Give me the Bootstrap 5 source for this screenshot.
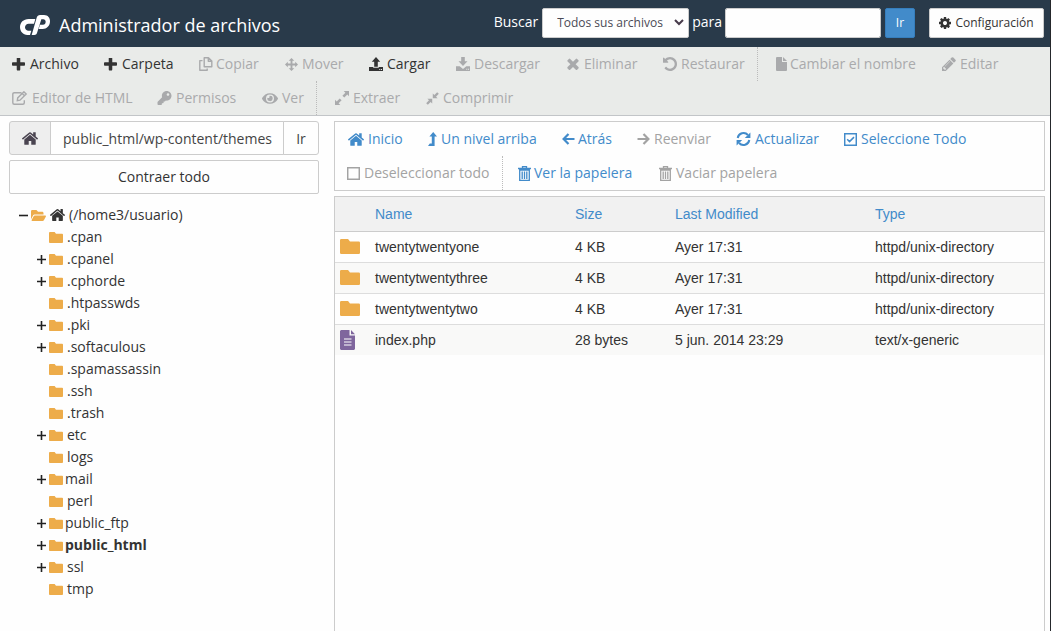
<!DOCTYPE html>
<html lang="es">
<head>
<meta charset="utf-8">
<title>Administrador de archivos</title>
<link rel="stylesheet" href="https://cdn.jsdelivr.net/npm/bootstrap@5.3.0/dist/css/bootstrap.min.css">
<style>
body{font:14px/20px "Open Sans",sans-serif;color:#333;background:#fefefe;height:631px;overflow:hidden;border-right:1px solid #25282c}
svg{display:block;fill:currentColor;flex:none}
.topbar{height:47px;background:#293a4a;color:#fff;padding:0 6px 2px 20px}
.brand-title{font-size:18px;margin-left:9px;padding-top:4px}
.logo{margin-top:5px}
.topbar .form-control,.topbar .form-select{height:30px;border:1px solid #ccc;border-radius:2px;font-size:12px;padding:0 14px;color:#4a4a55;background-color:#fefefe}
.topbar .form-select{width:147px;background-image:url("data:image/svg+xml,%3Csvg xmlns='http://www.w3.org/2000/svg' viewBox='0 0 10 7'%3E%3Cpath d='M1 1l4 4 4-4' fill='none' stroke='%23473b4b' stroke-width='2'/%3E%3C/svg%3E");background-size:10px 7px;background-position:right 4px center}
.topbar .search-box{width:156px}
.topbar .btn{height:30px;border-radius:2px;font-size:12px;line-height:18px;padding:0}
.btn-go{width:30px;background:#428bca;border-color:#357ebd;color:#fff}
.topbar .btn-config{width:115px;background:#fefefe;border-color:#ccc;color:#333;margin-left:10px}
.lbl{margin-top:-2px}
.lbl-for{margin-left:-1px;margin-right:-1px}
.tools{background:#e9ebe9;border-bottom:1px solid #c2c5c8;height:69px}
.trow{display:grid;height:34px;align-items:center;white-space:nowrap}
.r1{grid-template-columns:92px 95px 86px 84px 87px 111px 96px 94px 19px 166px auto;padding-left:12px}
.r2{grid-template-columns:145px 105px 54px 19px 91px auto;padding-left:12px}
.p1{grid-template-columns:80px 134px 75px 99px 108px auto;padding-left:13px}
.p2{grid-template-columns:155px 16px 141px auto;padding-left:12px}
.sep{border-left:1px dotted #bbb;height:34px}
.it,.it:hover{display:flex;align-items:center;color:#333;text-decoration:none!important}
.trow .off{color:#a9aaac}
.panel .it{color:#428bca}.panel .off{color:#a3a3a3}
.w13{width:13px}.w14{width:14px}.w16{width:16px}.w17{width:17px}.w18{width:18px}.w19{width:19px}.w20{width:20px}
.ic{flex:none}
.side{width:310px;margin-left:9px;padding-top:5px}
.path-group{height:34px}
.path-group>*{border:1px solid #ccc;font-size:14px;height:34px;color:#444}
.path-group .input-group-text{width:42px;background:#eee;padding:0 0 0 12px;border-radius:3px;color:#4a4450}
.path-group .form-control{padding:1px 11px 0 12px;background:#fefefe}
.path-group .btn{width:36px;padding:0;background:#fefefe;border-radius:3px}
.btn-collapse{height:34px;margin-top:5px;border:1px solid #ccc;border-radius:2px;font-size:14px;line-height:20px;padding:0;background:#fefefe;color:#333}
.tree{margin:10px 0 0;padding:0;list-style:none}
.tree li{height:22px;display:flex;align-items:center;padding-left:28px;white-space:nowrap}
.tree .tg{width:12px;flex:none;color:#222}
.tree .fo{color:#edac4a}
.tree .nm{margin-left:4px}
.tree .nm.tight{margin-left:2px}
.tree li.root{padding-left:10px}
.main{width:711px;margin:5px 0 0 15px}
.panel{height:70px;border:1px solid #ccc}
.files{margin-top:5px;height:440px;border:1px solid #ccc;border-bottom:0;font-family:"Liberation Sans",Arial,sans-serif}
.files .table{margin:0;table-layout:fixed;--bs-table-bg:transparent;color:#333}
.files th,.files td{padding:0;height:31px;font-weight:400;vertical-align:middle;border-bottom:1px solid #ddd;line-height:18px}
.files th{height:34px;padding-top:1px;color:#428bca;background:#f1f1f1;border-bottom:1px solid #ccc}
.files td:first-child{padding-left:5px}
.files tbody tr:nth-child(even) td{background:#f9f9f8}
.files tbody tr:last-child td{border-bottom:0}
</style>
</head>
<body>
<svg width="0" height="0" class="position-absolute">
<symbol id="plus" viewBox="192 192 1408 1408"><path d="M1600 736v192q0 40-28 68t-68 28h-416v416q0 40-28 68t-68 28h-192q-40 0-68-28t-28-68v-416h-416q-40 0-68-28t-28-68v-192q0-40 28-68t68-28h416v-416q0-40 28-68t68-28h192q40 0 68 28t28 68v416h416q40 0 68 28t28 68z"/></symbol>
<symbol id="home" viewBox="89 250 1614 1290"><path d="M1472 992v480q0 26-19 45t-45 19h-384v-384h-256v384h-384q-26 0-45-19t-19-45v-480q0-1 .5-3t.5-3l575-474 575 474q1 2 1 6zm223-69l-62 74q-8 9-21 11h-3q-13 0-21-7l-692-577-692 577q-12 8-24 7-13-2-21-11l-62-74q-8-10-7-23.500t11-21.500l719-599q32-26 76-26t76 26l244 204v-195q0-14 9-23t23-9h192q14 0 23 9t9 23v408l219 182q10 8 11 21.500t-7 23.500z"/></symbol>
<symbol id="pencil" viewBox="128 128 1536 1536"><path d="M491 1536l91-91-235-235-91 91v107h128v128h107zm523-928q0-22-22-22-10 0-17 7l-542 542q-7 7-7 17 0 22 22 22 10 0 17-7l542-542q7-7 7-17zm-54-192l416 416-832 832h-416v-416zm683 96q0 53-37 90l-166 166-416-416 166-165q36-38 90-38 53 0 91 38l235 234q37 39 37 91z"/></symbol>
<symbol id="cog" viewBox="128 128 1536 1536"><path d="M1152 896q0-106-75-181t-181-75-181 75-75 181 75 181 181 75 181-75 75-181zm512-109v222q0 12-8 23t-20 13l-185 28q-19 54-39 91 35 50 107 138 10 12 10 25t-9 23q-27 37-99 108t-94 71q-12 0-26-9l-138-108q-44 23-91 38-16 136-29 186-7 28-36 28h-222q-14 0-24.500-8.500t-11.500-21.500l-28-184q-49-16-90-37l-141 107q-10 9-25 9-14 0-25-11-126-114-165-168-7-10-7-23 0-12 8-23 15-21 51-66.500t54-70.500q-27-50-41-99l-183-27q-13-2-21-12.500t-8-23.500v-222q0-12 8-23t19-13l186-28q14-46 39-92-40-57-107-138-10-12-10-24 0-10 9-23 26-36 98.500-107.500t94.500-71.500q13 0 26 10l138 107q44-23 91-38 16-136 29-186 7-28 36-28h222q14 0 24.500 8.500t11.500 21.500l28 184q49 16 90 37l142-107q9-9 24-9 13 0 25 10 129 119 165 170 7 8 7 22 0 12-8 23-15 21-51 66.500t-54 70.500q26 50 41 98l183 28q13 2 21 12.500t8 23.500z"/></symbol>
<symbol id="times" viewBox="302 302 1188 1252"><path d="M1490 1322q0 40-28 68l-136 136q-28 28-68 28t-68-28l-294-294-294 294q-28 28-68 28t-68-28l-136-136q-28-28-28-68t28-68l294-294-294-294q-28-28-28-68t28-68l136-136q28-28 68-28t68 28l294 294 294-294q28-28 68-28t68 28l136 136q28 28 28 68t-28 68l-294 294 294 294q28 28 28 68z"/></symbol>
<symbol id="undo" viewBox="128 128 1536 1536"><path d="M1664 896q0 156-61 298t-164 245-245 164-298 61q-172 0-327-72.500t-264-204.500q-7-10-6.500-22.500t8.500-20.500l137-138q10-9 25-9 16 2 23 12 73 95 179 147t225 52q104 0 198.500-40.500t163.500-109.500 109.500-163.500 40.500-198.500-40.500-198.500-109.500-163.500-163.500-109.500-198.500-40.500q-98 0-188 35.500t-160 101.500l137 138q31 30 14 69-17 40-59 40h-448q-26 0-45-19t-19-45v-448q0-42 40-59 39-17 69 14l130 129q107-101 244.500-156.500t284.500-55.500q156 0 298 61t245 164 164 245 61 298z"/></symbol>
<symbol id="copy" viewBox="0 0 14 14"><path d="M5.200.7h4.300l3.300 3.200v5.900H5.200zM9.300.9v3.300h3.300M3.500 3.600H.8v9.700h7.400v-1.800" fill="none" stroke="currentColor" stroke-width="1.400" stroke-linejoin="round"/></symbol>
<symbol id="move" viewBox="0 0 14 14"><path d="M7 0l3 3H8v3h3V4l3 3-3 3V8H8v3h2l-3 3-3-3h2V8H3v2L0 7l3-3v2h3V3H4z"/></symbol>
<symbol id="upload" viewBox="0 0 14 14"><path d="M7 0l4.200 4.700H8.800v5H5.200v-5H2.800zM0 10h4.200v.7h5.600V10H14v4H0zm10.300 2v1h1v-1zm1.700 0v1h1v-1z" fill-rule="evenodd"/></symbol>
<symbol id="download" viewBox="0 0 14 14"><path d="M5.200 0h3.600v4.300h2.700L7 9 2.500 4.300h2.700zM0 9.300h3.700L7 12l3.300-2.700H14V14H0zm10.300 2.500v1h1v-1zm1.700 0v1h1v-1z" fill-rule="evenodd"/></symbol>
<symbol id="file" viewBox="0 0 11 14"><path d="M.7 0H6v5h5v8.300l-.7.700H.7L0 13.300V.7zM7 0l4 4H7z"/></symbol>
<symbol id="edit" viewBox="0 0 16 14"><path d="M9.500 1.700H2.300Q.8 1.700.8 3.200v8.500q0 1.500 1.500 1.500h8.500q1.500 0 1.500-1.500V9.200M5.300 9.600l.4-2.700L11.900.8l2.300 2.300L8 9.200zM10.200 2.500l2.300 2.300" fill="none" stroke="currentColor" stroke-width="1.400"/></symbol>
<symbol id="key" viewBox="0 0 512 512"><path d="M512 176.001C512 273.203 433.202 352 336 352c-11.220 0-22.190-1.062-32.827-3.069l-24.012 27.014A23.999 23.999 0 0 1 261.223 384H224v40c0 13.255-10.745 24-24 24h-40v40c0 13.255-10.745 24-24 24H24c-13.255 0-24-10.745-24-24v-78.059c0-6.365 2.529-12.470 7.029-16.971l161.802-161.802C163.108 213.814 160 195.271 160 176 160 78.798 238.797.001 335.999 0 433.488-.001 512 78.511 512 176.001zM336 128c0 26.510 21.490 48 48 48s48-21.490 48-48-21.490-48-48-48-48 21.490-48 48z"/></symbol>
<symbol id="eye" viewBox="0 64 576 384"><path d="M572.520 241.400C518.290 135.590 410.930 64 288 64S57.680 135.640 3.480 241.410a32.350 32.350 0 0 0 0 29.190C57.710 376.410 165.070 448 288 448s230.320-71.640 284.520-177.410a32.350 32.350 0 0 0 0-29.190zM288 400a144 144 0 1 1 144-144 143.930 143.930 0 0 1-144 144zm0-240a95.310 95.310 0 0 0-25.310 3.790 47.850 47.850 0 0 1-66.900 66.900A95.780 95.780 0 1 0 288 160z"/></symbol>
<symbol id="expand" viewBox="0 0 14 14"><path d="M8.700 0H14v5.300l-1.700-1.700-3 3-1.900-1.900 3-3zM0 8.700l1.700 1.700 3-3 1.900 1.900-3 3L5.300 14H0z"/></symbol>
<symbol id="compress" viewBox="0 0 14 14"><path d="M7.300 1.500L9 3.200l3-3L13.800 2l-3 3 1.700 1.700H7.300zM1.500 7.300h5.200v5.200L5 10.800l-3 3L.2 12l3-3z"/></symbol>
<symbol id="levelup" viewBox="0 0 9 14"><path d="M5.200 0L9 4.500H6.600V14H0l1.800-2.500h2v-7H1.400z"/></symbol>
<symbol id="left" viewBox="0 0 13 12"><path d="M6.500 1L1.600 6l4.900 5M2 6h10.500" fill="none" stroke="currentColor" stroke-width="2.200"/></symbol>
<symbol id="right" viewBox="0 0 13 12"><path d="M6.500 1l4.900 5-4.900 5M11 6H.5" fill="none" stroke="currentColor" stroke-width="2.200"/></symbol>
<symbol id="refresh" viewBox="0 0 14 14"><path d="M1.200 6A5.900 5.900 0 0 1 11.400 3M12.800 8A5.900 5.900 0 0 1 2.600 11" fill="none" stroke="currentColor" stroke-width="2"/><path d="M13.900.4V6H8.300zM.1 13.600V8h5.600z"/></symbol>
<symbol id="check" viewBox="0 0 13 13"><path d="M.7.700h11.600v11.600H.7zM3.200 6.300l2.300 2.300 4.500-4.500" fill="none" stroke="currentColor" stroke-width="1.500"/></symbol>
<symbol id="box" viewBox="0 0 13 13"><path d="M.7.700h11.600v11.600H.7z" fill="none" stroke="currentColor" stroke-width="1.500"/></symbol>
<symbol id="trash" viewBox="0 0 13 15"><path d="M0 2.500h13M4.500 2V.6h4V2M1.700 4h9.600v10.400H1.700zM4.200 5.500v7.500M6.500 5.500v7.500M8.800 5.500v7.500" fill="none" stroke="currentColor" stroke-width="1.300"/></symbol>
<symbol id="folder" viewBox="0 64 512 384" preserveAspectRatio="none"><path d="M480 128H256l-50-64H32Q0 64 0 96v320q0 32 32 32h448q32 0 32-32V160q0-32-32-32z"/></symbol>
<symbol id="open" viewBox="0 64 576 384" preserveAspectRatio="none"><path d="M572.694 292.093L500.270 416.248A63.997 63.997 0 0 1 444.989 448H45.025c-18.523 0-30.064-20.093-20.731-36.093l72.424-124.155A64 64 0 0 1 152 256h399.964c18.523 0 30.064 20.093 20.730 36.093zM152 224h328v-48c0-26.510-21.490-48-48-48H272l-64-64H48C21.490 64 0 85.490 0 112v278.046l69.077-118.418C86.214 242.250 117.989 224 152 224z"/></symbol>
<symbol id="tplus" viewBox="0 0 9 9"><path d="M0 4.500h9M4.500 0v9" stroke="currentColor" stroke-width="1.600"/></symbol>
<symbol id="tminus" viewBox="0 0 9 9"><path d="M0 4.500h9" stroke="currentColor" stroke-width="1.600"/></symbol>
</svg>

<header class="topbar d-flex align-items-center">
  <svg class="logo" width="30" height="20" viewBox="0 0 90 60"><path d="M46 12H26C10 12 0 23 0 36s9 24 22 24h8l4-13H24c-5 0-9-5-9-10 0-6 5-11 11-11h16zM35 60L50 8C52 3 55 0 60 0h12c12 0 18 9 18 19 0 14-10 23-22 23H56l4-13h9c5 0 8-4 8-9 0-4-3-7-7-7h-6L51 54c-1 4-4 6-8 6z"/></svg>
  <span class="brand-title">Administrador de archivos</span>
  <div class="d-flex align-items-center ms-auto gap-1">
    <span class="lbl">Buscar</span>
    <select class="form-select"><option>Todos sus archivos</option></select>
    <span class="lbl lbl-for">para</span>
    <input class="form-control search-box" type="text">
    <button class="btn btn-go">Ir</button>
    <button class="btn btn-config d-flex align-items-center justify-content-center"><svg width="12" height="12" class="me-1"><use href="#cog"/></svg>Configuración</button>
  </div>
</header>

<nav class="tools">
  <div class="trow r1">
    <a class="it"><span class="ic w18"><svg width="13" height="13"><use href="#plus"/></svg></span>Archivo</a>
    <a class="it"><span class="ic w18"><svg width="13" height="13"><use href="#plus"/></svg></span>Carpeta</a>
    <a class="it off"><span class="ic w17"><svg width="14" height="14"><use href="#copy"/></svg></span>Copiar</a>
    <a class="it off"><span class="ic w17"><svg width="13" height="13"><use href="#move"/></svg></span>Mover</a>
    <a class="it"><span class="ic w18"><svg width="14" height="14"><use href="#upload"/></svg></span>Cargar</a>
    <a class="it off"><span class="ic w18"><svg width="14" height="14"><use href="#download"/></svg></span>Descargar</a>
    <a class="it off"><span class="ic w17"><svg width="12" height="12"><use href="#times"/></svg></span>Eliminar</a>
    <a class="it off"><span class="ic w18"><svg width="14" height="14"><use href="#undo"/></svg></span>Restaurar</a>
    <span class="sep"></span>
    <a class="it off"><span class="ic w14"><svg width="11" height="14"><use href="#file"/></svg></span>Cambiar el nombre</a>
    <a class="it off"><span class="ic w18"><svg width="14" height="14"><use href="#pencil"/></svg></span>Editar</a>
  </div>
  <div class="trow r2">
    <a class="it off"><span class="ic w20"><svg width="16" height="14"><use href="#edit"/></svg></span>Editor de HTML</a>
    <a class="it off"><span class="ic w19"><svg width="15" height="14"><use href="#key"/></svg></span>Permisos</a>
    <a class="it off"><span class="ic w20"><svg width="16" height="11"><use href="#eye"/></svg></span>Ver</a>
    <span class="sep"></span>
    <a class="it off"><span class="ic w18"><svg width="14" height="14"><use href="#expand"/></svg></span>Extraer</a>
    <a class="it off"><span class="ic w17"><svg width="13" height="13"><use href="#compress"/></svg></span>Comprimir</a>
  </div>
</nav>

<div class="d-flex">
  <aside class="side">
    <div class="input-group path-group flex-nowrap">
      <span class="input-group-text"><svg width="16" height="13"><use href="#home"/></svg></span>
      <input class="form-control" type="text" value="public_html/wp-content/themes">
      <button class="btn">Ir</button>
    </div>
    <button class="btn btn-collapse w-100">Contraer todo</button>
    <ul class="tree">
      <li class="root"><span class="tg"><svg width="9" height="9"><use href="#tminus"/></svg></span><svg class="fo" width="15" height="11"><use href="#open"/></svg><svg class="ms-1" width="15" height="12"><use href="#home"/></svg><span class="nm">(/home3/usuario)</span></li>
      <li><span class="tg"></span><svg class="fo" width="14" height="11"><use href="#folder"/></svg><span class="nm">.cpan</span></li>
      <li><span class="tg"><svg width="9" height="9"><use href="#tplus"/></svg></span><svg class="fo" width="14" height="11"><use href="#folder"/></svg><span class="nm">.cpanel</span></li>
      <li><span class="tg"><svg width="9" height="9"><use href="#tplus"/></svg></span><svg class="fo" width="14" height="11"><use href="#folder"/></svg><span class="nm">.cphorde</span></li>
      <li><span class="tg"></span><svg class="fo" width="14" height="11"><use href="#folder"/></svg><span class="nm">.htpasswds</span></li>
      <li><span class="tg"><svg width="9" height="9"><use href="#tplus"/></svg></span><svg class="fo" width="14" height="11"><use href="#folder"/></svg><span class="nm">.pki</span></li>
      <li><span class="tg"><svg width="9" height="9"><use href="#tplus"/></svg></span><svg class="fo" width="14" height="11"><use href="#folder"/></svg><span class="nm">.softaculous</span></li>
      <li><span class="tg"></span><svg class="fo" width="14" height="11"><use href="#folder"/></svg><span class="nm">.spamassassin</span></li>
      <li><span class="tg"></span><svg class="fo" width="14" height="11"><use href="#folder"/></svg><span class="nm">.ssh</span></li>
      <li><span class="tg"></span><svg class="fo" width="14" height="11"><use href="#folder"/></svg><span class="nm">.trash</span></li>
      <li><span class="tg"><svg width="9" height="9"><use href="#tplus"/></svg></span><svg class="fo" width="14" height="11"><use href="#folder"/></svg><span class="nm">etc</span></li>
      <li><span class="tg"></span><svg class="fo" width="14" height="11"><use href="#folder"/></svg><span class="nm">logs</span></li>
      <li><span class="tg"><svg width="9" height="9"><use href="#tplus"/></svg></span><svg class="fo" width="14" height="11"><use href="#folder"/></svg><span class="nm tight">mail</span></li>
      <li><span class="tg"></span><svg class="fo" width="14" height="11"><use href="#folder"/></svg><span class="nm">perl</span></li>
      <li><span class="tg"><svg width="9" height="9"><use href="#tplus"/></svg></span><svg class="fo" width="14" height="11"><use href="#folder"/></svg><span class="nm tight">public_ftp</span></li>
      <li><span class="tg"><svg width="9" height="9"><use href="#tplus"/></svg></span><svg class="fo" width="14" height="11"><use href="#folder"/></svg><span class="nm tight fw-bold">public_html</span></li>
      <li><span class="tg"><svg width="9" height="9"><use href="#tplus"/></svg></span><svg class="fo" width="14" height="11"><use href="#folder"/></svg><span class="nm">ssl</span></li>
      <li><span class="tg"></span><svg class="fo" width="14" height="11"><use href="#folder"/></svg><span class="nm">tmp</span></li>
    </ul>
  </aside>

  <main class="main">
    <div class="panel">
      <div class="trow p1">
        <a class="it"><span class="ic w20"><svg width="16" height="13"><use href="#home"/></svg></span>Inicio</a>
        <a class="it"><span class="ic w13"><svg width="9" height="14"><use href="#levelup"/></svg></span>Un nivel arriba</a>
        <a class="it"><span class="ic w16"><svg width="13" height="12"><use href="#left"/></svg></span>Atrás</a>
        <a class="it off"><span class="ic w17"><svg width="13" height="12"><use href="#right"/></svg></span>Reenviar</a>
        <a class="it"><span class="ic w19"><svg width="15" height="14"><use href="#refresh"/></svg></span>Actualizar</a>
        <a class="it"><span class="ic w17"><svg width="13" height="13"><use href="#check"/></svg></span>Seleccione Todo</a>
      </div>
      <div class="trow p2">
        <a class="it off"><span class="ic w17"><svg width="13" height="13"><use href="#box"/></svg></span>Deseleccionar todo</a>
        <span class="sep"></span>
        <a class="it"><span class="ic w16"><svg width="13" height="15"><use href="#trash"/></svg></span>Ver la papelera</a>
        <a class="it off"><span class="ic w17"><svg width="13" height="15"><use href="#trash"/></svg></span>Vaciar papelera</a>
      </div>
    </div>
    <div class="files">
      <table class="table">
        <colgroup><col width="40"><col width="200"><col width="100"><col width="200"><col></colgroup>
        <thead><tr><th></th><th>Name</th><th>Size</th><th>Last Modified</th><th>Type</th></tr></thead>
        <tbody>
          <tr><td><svg width="20" height="15" color="#edac4a"><use href="#folder"/></svg></td><td>twentytwentyone</td><td>4 KB</td><td>Ayer 17:31</td><td>httpd/unix-directory</td></tr>
          <tr><td><svg width="20" height="15" color="#edac4a"><use href="#folder"/></svg></td><td>twentytwentythree</td><td>4 KB</td><td>Ayer 17:31</td><td>httpd/unix-directory</td></tr>
          <tr><td><svg width="20" height="15" color="#edac4a"><use href="#folder"/></svg></td><td>twentytwentytwo</td><td>4 KB</td><td>Ayer 17:31</td><td>httpd/unix-directory</td></tr>
          <tr><td><svg width="15" height="20" viewBox="0 0 15 20" color="#7f669d"><path d="M1 0h8.500v5.500H15V19l-1 1H1l-1-1V1zM11 0l4 4.300h-4z"/><path d="M4 9h7.500M4 12h7.500M4 15h7.500" stroke="#fff" stroke-width="1.200"/></svg></td><td>index.php</td><td>28 bytes</td><td>5 jun. 2014 23:29</td><td>text/x-generic</td></tr>
        </tbody>
      </table>
    </div>
  </main>
</div>
<script src="https://cdn.jsdelivr.net/npm/bootstrap@5.3.0/dist/js/bootstrap.bundle.min.js"></script>
</body>
</html>
